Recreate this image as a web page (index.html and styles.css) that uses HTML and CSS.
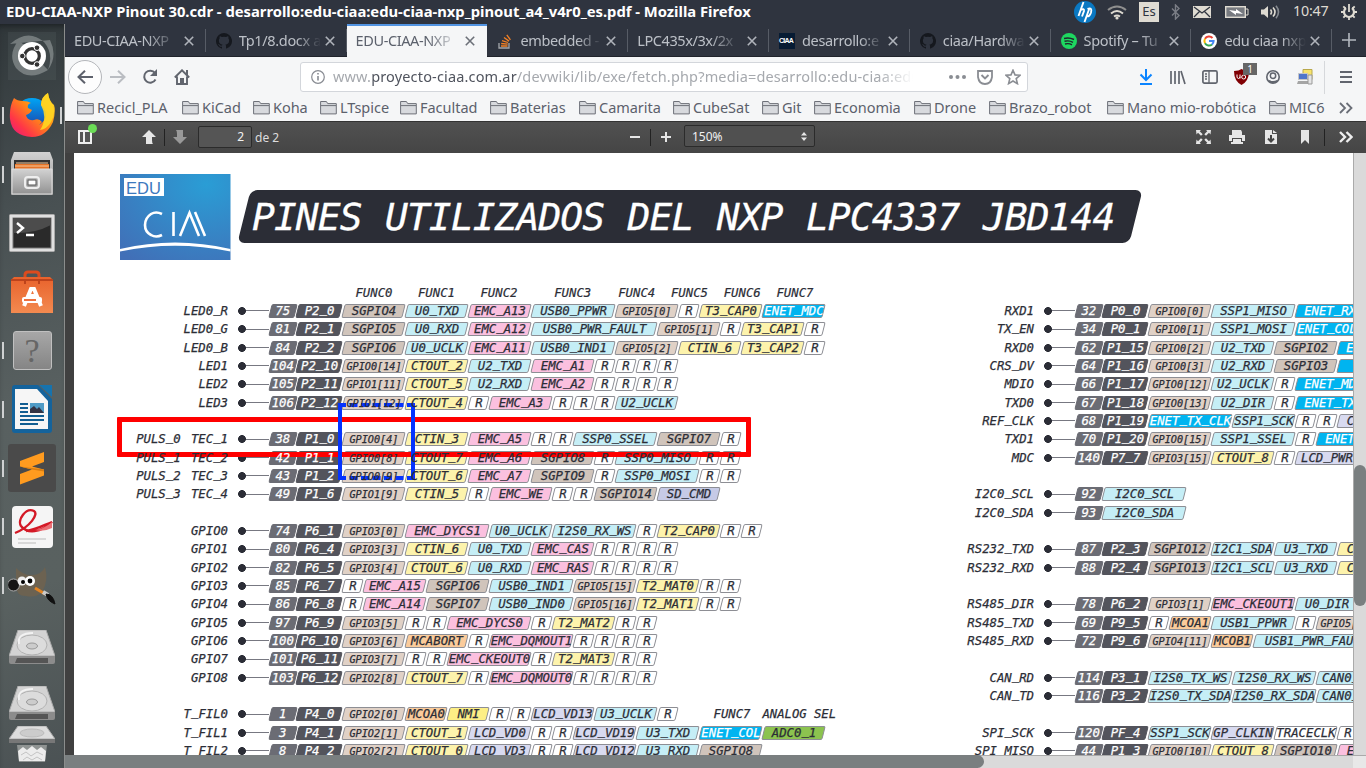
FILE: index.html
```html
<!DOCTYPE html>
<html lang="es">
<head>
<meta charset="utf-8">
<title>EDU-CIAA-NXP Pinout 30.cdr</title>
<link rel="stylesheet" href="styles.css">
</head>
<body>
<svg width="0" height="0" class="defs" aria-hidden="true">
  <defs>
    <linearGradient id="silver" x1="0" y1="0" x2="0" y2="1"><stop offset="0" stop-color="#d2d2d2"/><stop offset="1" stop-color="#929292"/></linearGradient>
    <linearGradient id="orange" x1="0" y1="0" x2="0" y2="1"><stop offset="0" stop-color="#e8622c"/><stop offset="1" stop-color="#f38a50"/></linearGradient>
    <linearGradient id="fox" x1="1" y1="0" x2="0" y2="1"><stop offset="0" stop-color="#ffe226"/><stop offset=".45" stop-color="#ff8a16"/><stop offset=".75" stop-color="#ff3647"/><stop offset="1" stop-color="#e31587"/></linearGradient>
    <linearGradient id="globe" x1="0" y1="0" x2="0" y2="1"><stop offset="0" stop-color="#00a5f5"/><stop offset="1" stop-color="#20309c"/></linearGradient>
    <symbol id="close" viewBox="0 0 10 10"><path d="M.8.8l8.4 8.4M9.2.8L.8 9.2" fill="none" stroke="currentColor" stroke-width="1.6"/></symbol>
    <symbol id="folder" viewBox="0 0 17 15"><path d="M.6 13.9V1.5h5.8l1.3 2.1h8.600v10.300z" fill="#d8dade" stroke="#6e7179"/><path d="M1 5.600h15" stroke="#6e7179"/></symbol>
    <symbol id="github" viewBox="0 0 16 16"><path fill="#15181e" d="M8 0a8 8 0 0 0-2.5 15.6c.4.1.5-.2.5-.4v-1.5c-2.2.5-2.7-1-2.7-1-.4-.9-.9-1.2-.9-1.2-.7-.5.1-.5.1-.5.8.1 1.2.8 1.2.8.7 1.2 1.9.9 2.3.7.1-.5.3-.9.5-1.1-1.8-.2-3.6-.9-3.6-4 0-.8.3-1.6.8-2.1 0-.2-.4-1 .1-2.1 0 0 .7-.2 2.2.8a7.500 7.500 0 0 1 4 0c1.500-1 2.200-.8 2.200-.8.5 1.100.1 1.900.1 2.100.5.5.8 1.300.8 2.100 0 3.100-1.900 3.800-3.700 4 .3.300.6.800.6 1.500v2.300c0 .2.100.500.500.400A8 8 0 0 0 8 0z"/></symbol>
    <symbol id="drive" viewBox="0 0 46 34"><path d="M9 0h28l9 26H0z" fill="#d3d3d3" stroke="#aaa"/><path d="M0 26h46v6q0 2-2 2H2q-2 0-2-2z" fill="#8c8c8c"/><path d="M8 28h31v5H6z" fill="#555"/><ellipse cx="23" cy="15" rx="15" ry="10" fill="#dcdcdc" stroke="#b2b2b2"/><ellipse cx="23" cy="16" rx="5.500" ry="3" fill="#ccc" stroke="#999"/><path d="M10 14Q8 3 24 3" fill="none" stroke="#f2f2f2" stroke-width="2"/></symbol>
  </defs>
</svg>

<header class="panel">
  <span class="window-title">EDU-CIAA-NXP Pinout 30.cdr - desarrollo:edu-ciaa:edu-ciaa-nxp_pinout_a4_v4r0_es.pdf - Mozilla Firefox</span>
  <div class="tray">
    <svg class="t-hp" width="22" height="22" viewBox="0 0 22 22"><circle cx="11" cy="11" r="11" fill="#0a78c2"/><path d="M9.500 1L4.500 15M6.500 9q4-2 3.500 1L8 15.500M15.500 7L10.500 21M13.500 8q5-2 3.500 3.500-1.500 5-5 3.500" fill="none" stroke="#fff" stroke-width="1.900"/></svg>
    <svg class="t-wifi" width="20" height="15" viewBox="0 0 20 15"><g fill="none" stroke="#dfdbd2" stroke-width="2"><path d="M1 5q9-7 18 0" opacity=".55"/><path d="M4 8.500q6-5 12 0"/><path d="M7 11.500q3-2 6 0"/></g><circle cx="10" cy="13" r="1.600" fill="#dfdbd2"/></svg>
    <span class="t-lang">Es</span>
    <svg class="t-bt" width="9" height="16" viewBox="0 0 9 16"><path d="M1 4.500l7 7L4.500 15V1L8 4.500l-7 7" fill="none" stroke="#7b7e86" stroke-width="1.400"/></svg>
    <svg class="t-mail" width="18" height="12" viewBox="0 0 18 12"><path fill="#dfdbd2" d="M0 0h18v12H0z"/><path d="M1 1l8 6 8-6M1 11l5.500-5.500M17 11l-5.500-5.500" fill="none" stroke="#2f343f" stroke-width="1.300"/></svg>
    <svg class="t-bat" width="24" height="12" viewBox="0 0 24 12"><rect x=".7" y=".7" width="19.600" height="10.600" fill="#777a80" stroke="#dfdbd2" stroke-width="1.400"/><path d="M20 3h3v6h-3" fill="none" stroke="#dfdbd2"/><path d="M4 4l7 1V3l7 5-7-1v2z" fill="#fff"/></svg>
    <svg class="t-vol" width="20" height="14" viewBox="0 0 20 14"><path d="M0 4.500h3L7 1v12L3 9.500H0z" fill="#dfdbd2"/><path d="M9.500 4.500q2 2.500 0 5M12 2.500q4 4.500 0 9" fill="none" stroke="#dfdbd2" stroke-width="1.600"/><path d="M15 .8q5 6.200 0 12.400" fill="none" stroke="#868a90" stroke-width="1.600"/></svg>
    <span class="t-clock">10:47</span>
    <svg class="t-gear" width="16" height="16" viewBox="0 0 16 16"><path d="M5 4a5 5 0 1 0 6 0" fill="none" stroke="#dfdbd2" stroke-width="2.200"/><path d="M8 0v8M8 13v3M0 8h3M13 8h3M2.300 2.300l2.200 2.200M13.700 2.300l-2.200 2.200M2.300 13.700l2.200-2.200M13.700 13.700l-2.200-2.200" stroke="#dfdbd2" stroke-width="1.800"/></svg>
  </div>
</header>

<div class="desktop">
<aside class="launcher">
  <div class="app"><svg width="48" height="48" viewBox="0 0 48 48"><path fill="#6b7474" d="M0 0h48v48H0z" opacity=".18"/><path d="M2 12Q20-4 36 10 46 22 40 38 50 24 42 8M40 38Q20 50 8 36-1 22 11 8" fill="#aab0b0" opacity=".5"/><circle cx="24" cy="24" r="14" fill="#fff"/><circle cx="24" cy="24" r="7.300" fill="none" stroke="#333" stroke-width="3.200"/><g fill="#333" stroke="#fff"><circle cx="14.300" cy="24" r="2.800"/><circle cx="29" cy="15.700" r="2.800"/><circle cx="29" cy="32.500" r="2.800"/></g></svg></div>
  <div class="app running focused"><svg width="46" height="46" viewBox="0 0 46 46"><circle cx="23" cy="24" r="18" fill="url(#globe)"/><path d="M5 6q3 3 9 3 5 0 8 2-4 1-3 5l4 2q-2 4-6 5 1 6 8 5 5-2 8 2-5 6-13 3 11 3 16-6 3-8-4-14 0-8 7-12 1 8 6 12 2 6-1 17-7 15-21 15Q3 44 1 27 0 15 5 6z" fill="url(#fox)"/><path d="M32 13q0-8 7-12 1 8 5 12 3 9-2 17-4 7-11 8 8-12 1-25z" fill="#ffd622" opacity=".9"/></svg></div>
  <div class="app running"><svg width="44" height="46" viewBox="0 0 44 46"><path d="M4 1h36l3 8v35H1V9z" fill="url(#silver)"/><path d="M4 9h36v12H4z" fill="#333"/><path d="M5 13h34v6H5z" fill="#e67327"/><path d="M6 12h32M5 15h34" stroke="#f7c99b"/><path d="M2 18h40v25H2z" fill="url(#silver)" stroke="#ddd"/><rect x="15" y="26" width="14" height="11" rx="3" fill="none" stroke="#eee" stroke-width="2"/><rect x="18" y="29" width="8" height="5" fill="#fff" stroke="#555"/></svg></div>
  <div class="app"><svg width="46" height="38" viewBox="0 0 46 38"><rect x=".5" y=".5" width="45" height="37" rx="1" fill="#e0e0e0" stroke="#aaa"/><rect x="4" y="4" width="38" height="30" fill="#2a2a2a" stroke="#777"/><path d="M4 4h38v7Q25 20 4 19z" fill="#4c4c4c"/><path d="M8 9l6 5-6 5M17 21h8" fill="none" stroke="#fff" stroke-width="2.400"/></svg></div>
  <div class="app"><svg width="44" height="44" viewBox="0 0 44 44"><path d="M15 14V5q0-3 3-3h8q3 0 3 3v9" fill="none" stroke="#dc4b1e" stroke-width="3"/><path d="M1 10l3-3h36l3 3v33H1z" fill="url(#orange)"/><path d="M15 14V9M29 14V9M1 10h42" stroke="#bd431c" stroke-width="2"/><path d="M14 36l7-17h3l7 17M17 26h11" fill="none" stroke="#fff" stroke-width="4"/><rect x="12" y="27" width="20" height="6" rx="2" fill="#fff"/><path d="M14 30h12" stroke="#ee7140" stroke-width="2"/></svg></div>
  <div class="app running"><div class="help-icon">?</div></div>
  <div class="app running"><svg width="40" height="48" viewBox="0 0 40 48"><path d="M3 0h23l14 14v31q0 3-3 3H3q-3 0-3-3V3q0-3 3-3z" fill="#14639c"/><path d="M3 4h22l11 12v28H3z" fill="#f6f6f6"/><path d="M27 0h13v12z" fill="#1673ae"/><path d="M8 19h8M8 23h8M8 27h8M8 31h24M8 35h24M8 39h18" stroke="#125e92" stroke-width="2"/><path d="M18 18h14v10H18z" fill="#4f9bc6"/><path d="M18 28v-4l4-3 3 3 2-2 5 6z" fill="#334"/></svg></div>
  <div class="app running"><svg width="48" height="48" viewBox="0 0 48 48"><rect width="48" height="48" rx="3" fill="#4a4a4a"/><path d="M12 17l24-9v10l-12 4.500 12 3v6l-24 9V30l12-4.500-12-3z" fill="#ff9b1f"/><path d="M12 22.500l24 3v2l-12-2z" fill="#d97e12"/></svg></div>
  <div class="app running"><svg width="41" height="42" viewBox="0 0 41 42"><rect width="41" height="42" rx="4" fill="#f5f5f5"/><path d="M3 27C18 21 27 8 22 5 14 1 5 14 9 20c6 8 20 7 31-4-8 3-16 8-26 9" fill="none" stroke="#d41926" stroke-width="2.400"/><path d="M23 24q9-1 17-8v6q-8 4-17 2z" fill="#eb7075"/><path d="M6 33h28M6 37h18" stroke="#bbb"/></svg></div>
  <div class="app running"><svg width="48" height="40" viewBox="0 0 48 40"><path d="M8 2q8 8 17 7 9-1 12-8 4 14-3 25-6 6-16 4Q8 30 8 20z" fill="#6c6251"/><circle cx="5.500" cy="19" r="6" fill="#151515" stroke="#aaa"/><circle cx="14" cy="15" r="4.500" fill="#eee"/><circle cx="22" cy="15" r="5" fill="#fff"/><circle cx="15" cy="16" r="2"/><circle cx="22" cy="15" r="2.400"/><path d="M27 22l10 6" stroke="#e28525" stroke-width="3"/><path d="M35 26l5 3" stroke="#ccc" stroke-width="4"/><path d="M38 28q7 0 9 10-8-3-9-10z" fill="#111" stroke="#111"/></svg></div>
  <div class="app disk"><svg width="46" height="34"><use href="#drive"/></svg></div>
  <div class="app disk low"><svg width="46" height="34"><use href="#drive"/></svg></div>
  <div class="app trash"><svg width="46" height="38" viewBox="0 0 46 38"><path d="M9 0h28l9 13H0z" fill="#ddd" stroke="#aaa"/><path d="M0 13h46v4H0z" fill="#777"/><ellipse cx="23" cy="7" rx="12" ry="4" fill="#ccc" stroke="#bbb"/><path d="M8 19h30l-2 17H10z" fill="#8f9392"/><path d="M9 25l5-4 4 3 5-4 5 4 4-3 5 4-1 10H10z" fill="#ececec"/><path d="M12 29l5-3 5 4 6-4 6 3M14 34l4-3 5 3 5-3 5 3" fill="none" stroke="#c4c4c4"/></svg></div>
</aside>

<main class="browser">
  <nav class="tabs">
    <div class="tab plain"><span>EDU-CIAA-NXP</span><svg class="x"><use href="#close"/></svg></div>
    <div class="tab"><svg class="fav"><use href="#github"/></svg><span>Tp1/8.docx a</span><svg class="x"><use href="#close"/></svg></div>
    <div class="tab plain active"><span>EDU-CIAA-NXP</span><svg class="x"><use href="#close"/></svg></div>
    <div class="tab"><svg class="fav" viewBox="0 0 16 16"><path d="M2 10v5h10v-5" fill="none" stroke="#a4a7ab" stroke-width="1.300"/><path d="M4 13h6.500M4.200 10.500l6.500.6M5 7.600l6 1.900M7 4.500l5 3.600M9.800 1.800l3.600 5" stroke="#f48024" stroke-width="1.300"/></svg><span>embedded -</span><svg class="x"><use href="#close"/></svg></div>
    <div class="tab plain"><span>LPC435x/3x/2x</span><svg class="x"><use href="#close"/></svg></div>
    <div class="tab"><b class="fav ciaa">CIAA</b><span>desarrollo:e</span><svg class="x"><use href="#close"/></svg></div>
    <div class="tab"><svg class="fav"><use href="#github"/></svg><span>ciaa/Hardwa</span><svg class="x"><use href="#close"/></svg></div>
    <div class="tab"><svg class="fav" viewBox="0 0 16 16"><circle cx="8" cy="8" r="8" fill="#1ed760"/><path d="M3 5.500q5-1.500 10 1M3.500 8.300q4.500-1.200 8.500 1M4 11q4-1 7 .8" fill="none" stroke="#20252c" stroke-width="1.400"/></svg><span>Spotify – Tu</span><svg class="x"><use href="#close"/></svg></div>
    <div class="tab"><svg class="fav" viewBox="0 0 16 16"><circle cx="8" cy="8" r="8" fill="#fff"/><g fill="none" stroke-width="2"><path d="M11.500 5A4.600 4.600 0 0 0 4 5.800" stroke="#ea4335"/><path d="M4 5.800a4.600 4.600 0 0 0 0 4.400" stroke="#fbbc05"/><path d="M4 10.200a4.600 4.600 0 0 0 7 1.200" stroke="#34a853"/><path d="M11 11.400A4.600 4.600 0 0 0 12.600 8H8" stroke="#4285f4"/></g></svg><span>edu ciaa nxp</span><svg class="x"><use href="#close"/></svg></div>
    <svg class="plus" width="14" height="14" viewBox="0 0 14 14"><path d="M7 0v14M0 7h14" stroke="#b4b8c0" stroke-width="1.600"/></svg>
  </nav>

  <section class="navbar">
    <div class="back"><svg width="16" height="14" viewBox="0 0 16 14"><path d="M16 7H1.500M8 .8L1.500 7 8 13.200" fill="none" stroke="#5d616b" stroke-width="2"/></svg></div>
    <svg class="fwd" width="16" height="14" viewBox="0 0 16 14"><path d="M0 7h14.500M8 .8L14.500 7 8 13.200" fill="none" stroke="#babdc2" stroke-width="2"/></svg>
    <svg class="reload" width="16" height="16" viewBox="0 0 16 16"><path d="M13.500 10.500A6 6 0 1 1 13 4" fill="none" stroke="#61656e" stroke-width="2"/><path d="M15 0v7H8z" fill="#61656e"/></svg>
    <svg class="home" width="16" height="16" viewBox="0 0 16 16"><path d="M.8 8.500L8 1.300l7.200 7.200M3 7.500V15h10V7.500" fill="none" stroke="#61656e" stroke-width="1.900"/><path d="M6 9h4v6H6zM12 1h2v5h-2z" fill="#61656e"/></svg>
    <div class="urlbar">
      <svg class="info" width="14" height="14" viewBox="0 0 14 14"><circle cx="7" cy="7" r="6.300" fill="none" stroke="#888b92" stroke-width="1.200"/><path d="M7 6v4.500M7 3v1.600" stroke="#888b92" stroke-width="1.600"/></svg>
      <span class="url">www.<b>proyecto-ciaa.com.ar</b>/devwiki/lib/exe/fetch.php?media=desarrollo:edu-ciaa:edu</span>
      <svg class="dots" width="17" height="4" viewBox="0 0 17 4"><g fill="#8a8d93"><circle cx="2" cy="2" r="2"/><circle cx="8.500" cy="2" r="2"/><circle cx="15" cy="2" r="2"/></g></svg>
      <svg width="16" height="15" viewBox="0 0 16 15"><path d="M1 1h14v6q-1 7-7 7T1 7z" fill="none" stroke="#8a8d93" stroke-width="1.800"/><path d="M4.500 5L8 8.500 11.500 5" fill="none" stroke="#8a8d93" stroke-width="1.900"/></svg>
      <svg width="16" height="16" viewBox="0 0 16 16"><path d="M8 1.200l2 4.700 5 .4-3.800 3.300 1.200 5L8 12l-4.400 2.600 1.200-5L1 6.300l5-.4z" fill="none" stroke="#8a8d93" stroke-width="1.600"/></svg>
    </div>
    <div class="actions">
      <svg class="a1" width="14" height="16" viewBox="0 0 14 16"><path d="M7 0v11M1.500 5.500L7 11l5.500-5.500M1 15h12" fill="none" stroke="#0a84ff" stroke-width="2"/></svg>
      <svg class="a2" width="16" height="15" viewBox="0 0 16 15"><path d="M1 1v13M5 1v13M9 1v13M11 1l4 13" stroke="#61656e" stroke-width="1.700"/></svg>
      <svg class="a3" width="16" height="14" viewBox="0 0 16 14"><rect x=".9" y=".9" width="14.200" height="12.200" rx="1.500" fill="none" stroke="#61656e" stroke-width="1.700"/><path d="M7 1v12M3 4h2M3 6.500h2M3 9h2" stroke="#61656e" stroke-width="1.300"/></svg>
      <div class="ublock"><svg width="15" height="16" viewBox="0 0 15 16"><path d="M7.500 0Q10 2 15 2q0 10-7.500 14Q0 12 0 2q5 0 7.500-2z" fill="#800004"/><path d="M3 5.500v3q1.500 2 3 0v-3M6 8v1.500" fill="none" stroke="#fff"/><circle cx="9.700" cy="8" r="2" fill="none" stroke="#fff"/></svg><em>1</em></div>
      <svg class="a5" width="14" height="14" viewBox="0 0 14 14"><circle cx="7" cy="7" r="6.200" fill="none" stroke="#61656e" stroke-width="1.600"/><circle cx="7" cy="5.700" r="2.700" fill="none" stroke="#61656e" stroke-width="1.500"/><path d="M3 10q4 2 8 0v2q-4 2-8 0z" fill="#61656e"/></svg>
      <svg class="a6" width="16" height="16" viewBox="0 0 16 16"><path d="M6 .5h9v10H6z" fill="#f7e36a" stroke="#b9a84c"/><path d="M1.500 4.500h9v6h-9z" fill="#4f75c9" stroke="#c5c5c5"/><path d="M1 12h10l1 3H0z" fill="#a5a5a5"/><path d="M11 6h4v9h-4z" fill="#e5e5e5" stroke="#999"/></svg>
      <i class="vline"></i>
      <svg class="a7" width="12" height="12" viewBox="0 0 12 12"><path d="M0 1h12M0 6h12M0 11h12" stroke="#61656e" stroke-width="1.800"/></svg>
    </div>
  </section>

  <section class="bookmarks" id="bookmarks"></section>

  <section class="pdfbar">
    <div class="side"><svg width="15" height="14" viewBox="0 0 15 14"><path d="M0 0h14v14H0z" fill="#eee"/><path d="M2 2h3v10H2zM7 2h5v10H7z" fill="#555"/></svg><i></i></div>
    <svg class="up" width="14" height="14" viewBox="0 0 14 14"><path d="M7 0l7 7h-4v3q0 3 1 4H4V7H0z" fill="#e6e6e6"/></svg>
    <i class="sep"></i>
    <svg class="down" width="14" height="14" viewBox="0 0 14 14"><path d="M7 14L0 7h4V4Q4 1 3 0h7v7h4z" fill="#999"/></svg>
    <div class="pageno">2</div><span class="of">de 2</span>
    <svg class="minus" width="10" height="2"><path d="M0 0h10v2H0z" fill="#e6e6e6"/></svg>
    <i class="sep s2"></i>
    <svg class="pluszoom" width="10" height="10"><path d="M4 0h2v4h4v2H6v4H4V6H0V4h4z" fill="#e6e6e6"/></svg>
    <div class="zoom"><span>150%</span><svg width="6" height="9" viewBox="0 0 6 9"><path d="M3 0l3 3.500H0zM3 9L0 5.500h6z" fill="#e6e6e6"/></svg></div>
    <div class="tools">
      <svg class="b1" width="15" height="14" viewBox="0 0 15 14"><path d="M0 0h5L3.700 1.300l3 3-1.700 1.500-3-3L.5 4.500zM15 0h-5l1.300 1.300-3 3L10 5.800l3-3L14.500 4.500zM0 14h5l-1.300-1.300 3-3L5 8.200l-3 3L.5 9.500zM15 14h-5l1.300-1.300-3-3L10 8.200l3 3 1.500-1.700z" fill="#e6e6e6"/></svg>
      <svg class="b2" width="16" height="14" viewBox="0 0 16 14"><path d="M3 0h9l1 2v3H3zM0 5h16v6h-3V8H3v3H0zM4 9h8v3H4zM2 12h12v2H2z" fill="#e6e6e6"/></svg>
      <svg class="b3" width="12" height="14" viewBox="0 0 12 14"><path d="M0 0h7v4h5v10H0z" fill="#e6e6e6"/><path d="M8 0l4 3H8z" fill="#e6e6e6"/><path d="M6 5v6M3 8.500l3 3 3-3" fill="none" stroke="#444" stroke-width="2"/></svg>
      <svg class="b4" width="8" height="14" viewBox="0 0 8 14"><path d="M0 0h8v14L4 10l-4 4z" fill="#e6e6e6"/></svg>
      <i class="sep"></i>
      <svg class="b5" width="14" height="12" viewBox="0 0 14 12"><path d="M1 1l5 5-5 5M7.500 1l5 5-5 5" fill="none" stroke="#eee" stroke-width="2.400"/></svg>
    </div>
  </section>

  <section class="viewer">
    <div class="paper">
      <div class="doc-head">
        <svg class="logo" width="111" height="86" viewBox="0 0 111 86"><defs><radialGradient id="sky" cx=".78" cy=".12" r="1.100"><stop offset="0" stop-color="#2a9dd5"/><stop offset="1" stop-color="#416fb7"/></radialGradient></defs><path d="M0 0h110.500v86H0z" fill="url(#sky)"/><path d="M4 4h40v18H4z" fill="#fff"/><text x="6" y="20" class="edu">EDU</text><path d="M42 40q-6-3-11 0-6 4-6 11t6 10q5 3 11 0M53.500 38v24M60 62l9.500-23L79 62M75 38l10 24" fill="none" stroke="#fff" stroke-width="2.600"/><path d="M0 75q55-13 110.500 0v2.500Q55 66 0 77.500z" fill="#fff"/></svg>
        <h1>PINES UTILIZADOS DEL NXP LPC4337 JBD144</h1>
      </div>
      <div class="func-head"><span>FUNC0</span><span>FUNC1</span><span>FUNC2</span><span class="w4">FUNC3</span><span class="w2">FUNC4</span><span>FUNC5</span><span class="w2">FUNC6</span><span>FUNC7</span></div>
      <div class="pinout"><div class="pins" id="pins-left"></div><div class="pins" id="pins-right"></div></div>
      <div class="mark red"></div>
      <div class="mark blue"></div>
    </div>
    <div class="vscroll"><i></i></div>
    <div class="hscroll"><i></i></div>
  </section>
</main>
</div>
<script src="pinout.js"></script>
</body>
</html>
```

FILE: styles.css
```css
* { box-sizing: border-box; }
body { margin: 0; width: 1366px; height: 768px; overflow: hidden; font-family: "Noto Sans", "Open Sans", sans-serif; background: #2f343f; }
svg { display: block; flex: none; }
.defs { position: absolute; }

/* top panel */
.panel { height: 24px; display: flex; align-items: center; color: #fff; background: #2f343f; }
.window-title { padding: 0 0 2px 6px; width: 1067px; font: bold 14.800px/20px "Noto Sans", sans-serif; letter-spacing: -.02px; white-space: nowrap; }
.tray { display: flex; align-items: center; }
.t-hp { margin-left: 7px; }
.t-wifi { margin-left: 11px; }
.t-lang { margin-left: 12px; width: 20px; height: 20px; background: #dfdbd2; color: #2f343f; font-size: 13px; line-height: 19px; text-align: center; }
.t-bt { margin-left: 12px; }
.t-mail { margin-left: 13px; }
.t-bat { margin-left: 14px; }
.t-vol { margin-left: 12px; }
.t-clock { margin-left: 12px; width: 36px; font-size: 14.300px; line-height: 20px; padding-bottom: 2px; letter-spacing: -.2px; color: #dfdbd2; white-space: nowrap; }
.t-gear { margin-left: 12px; }

.desktop { display: flex; height: 744px; }

/* launcher */
.launcher { width: 65px; flex: none; height: 744px; overflow: hidden; padding-top: 3px; background: linear-gradient(160deg, #30373a 0, #485052 25%, #586060 50%, #596160 75%, #4b5254 100%); border-right: 1px solid #8b8d8c; box-shadow: inset 0 6px 6px -4px #1c2023; }
.app { height: 58.800px; display: flex; align-items: center; justify-content: center; position: relative; }
.running::before { content: ""; position: absolute; left: 2px; top: 21px; width: 2px; height: 17px; background: #cfd1d2; }
.focused::after { content: ""; position: absolute; right: 2px; top: 21px; width: 2px; height: 17px; background: #cfd1d2; }
.help-icon { width: 39px; height: 39px; border: 1px solid #c0c0c0; border-radius: 3px; background: linear-gradient(#a7a7a7, #858585); color: #666; font: 34px/37px "Liberation Serif", serif; text-align: center; }
.disk { padding-top: 6px; }
.disk.low { height: 52px; padding-top: 7px; }
.trash { height: 38px; }

/* tabs */
.browser { flex: 1; min-width: 0; display: flex; flex-direction: column; }
.tabs { height: 33px; display: flex; align-items: center; background: #2f343f; border-bottom: 1px solid #20232b; }
.tab { width: 140.800px; height: 33px; flex: none; display: flex; align-items: center; padding: 1px 12px 0 10px; position: relative; color: #bcc0c7; font-size: 14.500px; }
.tab::after { content: ""; position: absolute; right: 0; top: 5px; height: 23px; width: 1px; background: #575c66; }
.tab.plain { padding-left: 9px; }
.tab span { flex: 1; overflow: hidden; white-space: nowrap; -webkit-mask-image: linear-gradient(90deg, #000 70%, transparent 100%); mask-image: linear-gradient(90deg, #000 70%, transparent 100%); margin-right: 4px; letter-spacing: -.35px; line-height: 20px; margin-top: -2px; }
.tab.plain span { letter-spacing: -.400px; margin-right: 6px; }
.tab .x { width: 10px; height: 10px; color: #b0b4bb; }
.fav { width: 16px; height: 16px; flex: none; margin-right: 7px; }
.ciaa { background: #071b33; color: #fff; font: bold 7px/16px "Liberation Sans", sans-serif; letter-spacing: -.8px; }
.tab.active { background: #f5f6f7; border-top: 2px solid #5294e2; color: #5c616c; padding-top: 0; }
.tab.active::after { display: none; }
.tab.active .x { color: #6c7078; }
.plus { margin-left: 10px; }

/* navigation */
.navbar { height: 40px; background: #f5f6f7; display: flex; align-items: center; }
.back { width: 34px; height: 34px; margin-left: 3px; border: 1px solid #b4b6ba; border-radius: 50%; background: #fdfdfd; display: flex; align-items: center; justify-content: center; }
.fwd { margin-left: 8px; }
.reload { margin-left: 16px; }
.home { margin-left: 16px; }
.urlbar { margin-left: 110px; width: 728px; height: 30px; border: 1px solid #d3d6db; border-radius: 3px; background: #fff; display: flex; align-items: center; padding-left: 10px; }
.url { width: 580px; margin: -2px 0 0 8px; overflow: hidden; white-space: nowrap; font-size: 14.500px; color: #a6a9ae; -webkit-mask-image: linear-gradient(90deg, #000 94%, transparent); mask-image: linear-gradient(90deg, #000 94%, transparent); letter-spacing: .160px; }
.url b { font-weight: 400; color: #50545e; }
.dots { margin: 0 11px 0 36px; }
.urlbar svg:last-child { margin-left: 12px; }
.actions { display: flex; align-items: center; margin-left: 111px; }
.a2, .a3, .ublock { margin-left: 16.500px; }
.ublock { position: relative; margin-left: 16px; }
.ublock em { position: absolute; left: 9px; top: -6px; width: 14px; height: 12px; background: #666; color: #fff; font: 10px/12px "Noto Sans", sans-serif; text-align: center; }
.a5 { margin-left: 17px; }
.a6 { margin-left: 17px; }
.vline { width: 1px; height: 33px; margin-left: 11px; background: #d6d8db; }
.a7 { margin-left: 15px; }

.bookmarks { height: 24px; background: #f5f6f7; display: flex; align-items: center; color: #5c616c; font-size: 14.500px; padding: 0 0 3px 12px; }
.bm { flex: none; display: flex; align-items: center; gap: 3px; white-space: nowrap; letter-spacing: -.03px; }
.bm svg { width: 17px; height: 15px; }
.bm span { margin-top: -1px; }

/* pdf toolbar */
.pdfbar { height: 32px; display: flex; align-items: center; padding-bottom: 1px; background: linear-gradient(#515151, #454545); border-top: 1px solid #333; color: #ddd; font-size: 12px; flex: none; }
.side { margin-left: 13px; position: relative; }
.side i { position: absolute; right: -4px; top: -6px; width: 9px; height: 9px; border-radius: 50%; background: #6bdc56; }
.up { margin-left: 49px; }
.sep { width: 1px; height: 17px; background: #222; margin: 0 8px; }
.pageno { width: 54px; height: 22px; margin-left: 11px; border: 1px solid #2b2b2b; border-radius: 2px; background: #555; text-align: right; padding-right: 7px; line-height: 20px; color: #f2f2f2; }
.of { width: 378px; padding-left: 3px; }
.s2 { margin: 0 10px; }
.zoom { margin-left: 13px; width: 131px; height: 22px; border: 1px solid #2b2b2b; border-radius: 2px; background: #505050; display: flex; align-items: center; justify-content: space-between; padding: 0 7px; color: #f2f2f2; margin-top: -2px; }
.tools { display: flex; align-items: center; margin-left: 381px; }
.b2 { margin-left: 18px; }
.b3 { margin-left: 20px; }
.b4 { margin-left: 24px; }
.tools .sep { margin: 0 0 0 15px; }
.b5 { margin-left: 14px; }

/* viewer */
.viewer { flex: 1; min-height: 0; background: #404040; padding-left: 9px; display: grid; grid-template: 602px 13px / 1279px 13px; }
.paper { background: #fff; overflow: hidden; position: relative; font-family: "DejaVu Sans Mono", monospace; font-style: italic; color: #2b2d36; }
.doc-head { display: flex; align-items: flex-start; padding: 21px 0 0 46px; height: 133px; }
.edu { font: 16.500px "Liberation Sans", sans-serif; fill: #3d79be; }
h1 { position: relative; z-index: 0; margin: 16px 0 0 13px; width: 892px; height: 53px; padding-left: 8px; font-size: 38px; font-weight: 400; line-height: 54px; letter-spacing: -.960px; word-spacing: 1.500px; color: #fff; white-space: nowrap; -webkit-text-stroke: .3px #fff; }
h1::before { content: ""; position: absolute; z-index: -1; inset: 0 0 0 0; border-radius: 7px; background: #2b2d36; transform: skewX(-14deg); }
.func-head { display: flex; height: 15.800px; padding-left: 268.700px; font-size: 12.300px; line-height: 14px; -webkit-text-stroke: .2px #2b2d36; }
.func-head span { width: 62.500px; text-align: center; }
.func-head .w4 { width: 85px; }
.func-head .w2 { width: 43px; }
.pinout { display: flex; width: 1800px; }
.pins { width: 806px; flex: none; }
.pin { height: 18.333px; display: flex; align-items: center; font-size: 12.300px; line-height: 14px; white-space: nowrap; -webkit-text-stroke: .25px currentColor; }
.name { width: 154px; text-align: right; word-spacing: 3px; flex: none; position: relative; z-index: 2; white-space: pre; }
.us { position: relative; top: -2px; }
.wire { width: 31px; height: 8px; margin-left: 10px; background: radial-gradient(circle at 4px 4px, #2b2d36 3.600px, transparent 4.200px), linear-gradient(#777881, #777881) 0 3.500px / 100% 1px no-repeat; flex: none; }
.cell { position: relative; flex: none; height: 14px; display: flex; justify-content: center; width: 63px; }
.cell::before { content: ""; position: absolute; inset: 0 .800px; border: 1px solid #8d8e94; border-radius: 2px; background: #c5eef6; transform: skewX(-14deg); }
.cell span { position: relative; z-index: 2; }
.u1 { width: 21px; } .u2 { width: 42px; } .u4 { width: 84px; } .u5 { width: 105px; } .u6 { width: 126px; }
.num { width: 27.600px; } .port { width: 45.900px; }
.num, .port, .enet { color: #fff; }
.num::before { background: #6b6c74; border-color: #6b6c74; }
.port::before { background: #53545c; border-color: #53545c; }
.enet::before { background: #00b4f0; }
.reserved::before, .trace::before { background: #fff; }
.gpio::before { background: #e0d1c6; }
.gpio { font-size: 10.200px; line-height: 15px; }
.sgpio::before { background: #d0c4bb; }
.emc::before { background: #fbc0df; }
.timer::before { background: #fdf3ac; }
.lcd::before { background: #d8daf0; }
.sd::before { background: #c6cae6; }
.motor::before { background: #fbcb9a; }
.nmi::before { background: #fdef85; }
.adc::before { background: #8cc34f; }
.note { margin-left: 35px; white-space: pre; }
.note b { font-weight: 400; margin-left: 12px; letter-spacing: -.050px; }
.mark { position: absolute; z-index: 1; }
.red { left: 43px; top: 264px; width: 634px; height: 40px; border: 5px solid #f00; border-radius: 1px; }
.blue { left: 264px; top: 250px; width: 77px; height: 77px; border: 4px solid #0433ff; border-top-style: dashed; border-bottom-style: dashed; }
.vscroll { background: #dadada; border-left: 1px solid #aaa; padding-top: 312px; }
.vscroll i { display: block; height: 141px; border-radius: 7px; background: #7a7f80; }
.hscroll { grid-column: 1 / 3; margin-left: -9px; background: linear-gradient(90deg, #dadada 1288px, #e8e8e8 1288px); border-top: 1px solid #aaa; }
.hscroll i { display: block; width: 919px; height: 13px; margin-top: -1px; border-radius: 0 7px 7px 0; background: #7a7f80; }
```

FILE: pinout.js
```javascript
// Each line: signal | pin number | port | functions (":n" gives the cell span, default 3; R is 1)
const left = `LED0_R|75|P2_0|SGPIO4 U0_TXD EMC_A13 USB0_PPWR:4 GPIO5[0] R T3_CAP0 ENET_MDC
LED0_G|81|P2_1|SGPIO5 U0_RXD EMC_A12 USB0_PWR_FAULT:6 GPIO5[1] R T3_CAP1 R
LED0_B|84|P2_2|SGPIO6 U0_UCLK EMC_A11 USB0_IND1:4 GPIO5[2] CTIN_6 T3_CAP2 R
LED1|104|P2_10|GPIO0[14] CTOUT_2 U2_TXD EMC_A1 R R R R
LED2|105|P2_11|GPIO1[11] CTOUT_5 U2_RXD EMC_A2 R R R R
LED3|106|P2_12|GPIO1[12] CTOUT_4 R EMC_A3 R R R U2_UCLK

PULS_0 TEC_1|38|P1_0|GPIO0[4] CTIN_3 EMC_A5 R R SSP0_SSEL:4 SGPIO7 R
PULS_1 TEC_2|42|P1_1|GPIO0[8] CTOUT_7 EMC_A6 SGPIO8 R SSP0_MISO:4 R R
PULS_2 TEC_3|43|P1_2|GPIO0[9] CTOUT_6 EMC_A7 SGPIO9 R SSP0_MOSI:4 R R
PULS_3 TEC_4|49|P1_6|GPIO1[9] CTIN_5 R EMC_WE R R SGPIO14 SD_CMD

GPIO0|74|P6_1|GPIO3[0] EMC_DYCS1:4 U0_UCLK I2S0_RX_WS:4 R T2_CAP0 R R
GPIO1|80|P6_4|GPIO3[3] CTIN_6 U0_TXD EMC_CAS R R R R
GPIO2|82|P6_5|GPIO3[4] CTOUT_6 U0_RXD EMC_RAS R R R R
GPIO3|85|P6_7|R EMC_A15 SGPIO6 USB0_IND1:4 GPIO5[15] T2_MAT0 R R
GPIO4|86|P6_8|R EMC_A14 SGPIO7 USB0_IND0:4 GPIO5[16] T2_MAT1 R R
GPIO5|97|P6_9|GPIO3[5] R R EMC_DYCS0:4 R T2_MAT2 R R
GPIO6|100|P6_10|GPIO3[6] MCABORT R EMC_DQMOUT1:4 R R R R
GPIO7|101|P6_11|GPIO3[7] R R EMC_CKEOUT0:4 R T2_MAT3 R R
GPIO8|103|P6_12|GPIO2[8] CTOUT_7 R EMC_DQMOUT0:4 R R R R

T_FIL0|1|P4_0|GPIO2[0] MCOA0:2 NMI:2 R R LCD_VD13 U3_UCLK R|FUNC7|ANALOG SEL
T_FIL1|3|P4_1|GPIO2[1] CTOUT_1 LCD_VD0 R R LCD_VD19 U3_TXD ENET_COL ADC0_1
T_FIL2|8|P4_2|GPIO2[2] CTOUT_0 LCD_VD3 R R LCD_VD12 U3_RXD SGPIO8`;

const right = `RXD1|32|P0_0|GPIO0[0] SSP1_MISO:4 ENET_RXD1:4
TX_EN|34|P0_1|GPIO0[1] SSP1_MOSI:4 ENET_COL
RXD0|62|P1_15|GPIO0[2] U2_TXD SGPIO2 ENET_RXD0:4
CRS_DV|64|P1_16|GPIO0[3] U2_RXD SGPIO3 ENET_RX_DV:5
MDIO|66|P1_17|GPIO0[12] U2_UCLK R ENET_MDIO:4
TXD0|67|P1_18|GPIO0[13] U2_DIR R ENET_TXD0:4
REF_CLK|68|P1_19|ENET_TX_CLK:4 SSP1_SCK R R CLKOUT
TXD1|70|P1_20|GPIO0[15] SSP1_SSEL:4 R ENET_TXD1:4
MDC|140|P7_7|GPIO3[15] CTOUT_8 R LCD_PWR

I2C0_SCL|92||I2C0_SCL:4
I2C0_SDA|93||I2C0_SDA:4

RS232_TXD|87|P2_3|SGPIO12 I2C1_SDA U3_TXD CTIN_1
RS232_RXD|88|P2_4|SGPIO13 I2C1_SCL U3_RXD CTIN_0

RS485_DIR|78|P6_2|GPIO3[1] EMC_CKEOUT1:4 U0_DIR
RS485_TXD|69|P9_5|R MCOA1:2 USB1_PPWR:4 R GPIO5[18]
RS485_RXD|72|P9_6|GPIO4[11] MCOB1:2 USB1_PWR_FAULT:6

CAN_RD|114|P3_1|I2S0_TX_WS:4 I2S0_RX_WS:4 CAN0_RD
CAN_TD|116|P3_2|I2S0_TX_SDA:4 I2S0_RX_SDA:4 CAN0_TD

SPI_SCK|120|PF_4|SSP1_SCK GP_CLKIN TRACECLK R
SPI_MISO|44|P1_3|GPIO0[10] CTOUT_8 SGPIO10 EMC_OE`;

const kinds = [
  [/^R$/, 'reserved u1'], [/^GPIO/, 'gpio'], [/^SGPIO/, 'sgpio'], [/^EMC/, 'emc'],
  [/^(CT|T\d)/, 'timer'], [/^ENET/, 'enet'], [/^(LCD|GP_|CLK)/, 'lcd'], [/^SD_/, 'sd'],
  [/^MC/, 'motor'], [/^NMI/, 'nmi'], [/^ADC/, 'adc'], [/^TRACE/, 'trace']
];

// Underscores sit on the baseline so they stay inside the cell outline
const label = text => text.replace(/_/g, '<i class="us">_</i>');
const cell = (text, cls) => `<div class="cell ${cls}"><span>${label(text)}</span></div>`;

function row(line) {
  if (!line) return '<div class="pin"></div>';
  const [name, num, port, funcs, noteA, noteB] = line.split('|');
  const cells = funcs.split(' ').map(f => {
    const [text, span] = f.split(':');
    const kind = kinds.find(k => k[0].test(text));
    return cell(text, (kind ? kind[1] : '') + (span ? ' u' + span : ''));
  }).join('');
  return `<div class="pin"><div class="name">${label(name)}</div><i class="wire"></i>` +
    cell(num, 'num') + (port ? cell(port, 'port') : '') + cells +
    (noteA ? `<div class="note">${noteA}<b>${noteB}</b></div>` : '') + '</div>';
}

document.getElementById('pins-left').innerHTML = left.split('\n').map(row).join('');
document.getElementById('pins-right').innerHTML = right.split('\n').map(row).join('');

const bookmarks = [['Recicl_PLA', 105], ['KiCad', 71], ['Koha', 67], ['LTspice', 80], ['Facultad', 90],
  ['Baterias', 89], ['Camarita', 94], ['CubeSat', 89], ['Git', 52], ['Economìa', 100], ['Drone', 75],
  ['Brazo_robot', 118], ['Mano mio-robótica', 162], ['MIC6', 70]];
document.getElementById('bookmarks').innerHTML = bookmarks.map(([t, w]) =>
  `<div class="bm" style="width:${w}px"><svg><use href="#folder"/></svg><span>${t}</span></div>`).join('') +
  '<svg width="14" height="12" viewBox="0 0 14 12"><path d="M1 1l5 5-5 5M7.500 1l5 5-5 5" fill="none" stroke="#6a6e77" stroke-width="1.800"/></svg>';
```
